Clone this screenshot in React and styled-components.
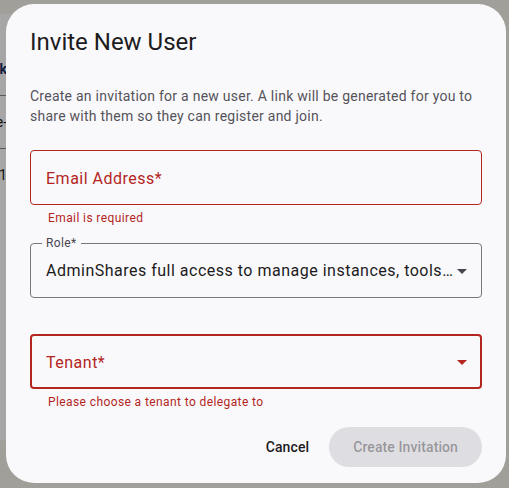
import React from 'react';
import styled, { createGlobalStyle } from 'styled-components';

const GlobalStyle = createGlobalStyle`
  html, body {
    margin: 0;
    height: 100%;
  }
  body {
    font-family: Roboto, 'Noto Sans', sans-serif;
    background: #f6f5ed;
    overflow: hidden;
  }
`;

const ERROR = '#b3261e';

const Page = styled.div`
  padding-top: 14px;
`;

const Card = styled.div`
  width: 490px;
  height: 426px;
  background: #ffffff;
  padding-top: 28px;
  box-sizing: border-box;
`;

const Row = styled.div`
  display: flex;
  align-items: center;
  height: ${(p) => (p.$header ? '53px' : '52px')};
  border-bottom: 1px solid ${(p) => (p.$last ? 'transparent' : '#8a8a8a')};
`;

const Cell = styled.div`
  width: 7px;
  display: flex;
  justify-content: flex-end;
  white-space: nowrap;
  font-size: 14px;
  font-weight: ${(p) => (p.$bold ? 700 : 400)};
  color: ${(p) => (p.$bold ? '#1c2f63' : '#222')};
`;

const Backdrop = styled.div`
  position: fixed;
  inset: 0;
  background: rgba(0, 0, 0, 0.35);
  display: flex;
  align-items: flex-start;
  justify-content: flex-start;
  padding: 4px 0 0 6px;
`;

const Dialog = styled.div`
  width: 500px;
  box-sizing: border-box;
  padding: 22px 24px 16px;
  background: #f9f9fc;
  border-radius: 28px;
  display: flex;
  flex-direction: column;
`;

const Title = styled.h2`
  margin: 0;
  font-size: 24px;
  line-height: 32px;
  font-weight: 400;
  color: #1d1b20;
`;

const Description = styled.p`
  margin: 28px 0 0;
  font-size: 14px;
  line-height: 20px;
  letter-spacing: 0.25px;
  color: #55535a;
`;

const Field = styled.div`
  position: relative;
  height: 55px;
  margin-top: ${(p) => p.$gap}px;
  box-sizing: border-box;
  display: flex;
  align-items: center;
  border: ${(p) => p.$border}px solid ${(p) => p.$color};
  border-radius: 4px;
  padding: ${(p) => (p.$empty ? 3 : 0)}px ${(p) => 8 - p.$border}px 0 ${(p) => 16 - p.$border}px;
`;

const FloatingLabel = styled.span`
  position: absolute;
  top: -9px;
  left: 11px;
  padding: 0 4px;
  background: #f9f9fc;
  font-size: 12px;
  line-height: 16px;
  letter-spacing: 0.4px;
  color: #49454f;
`;

const FieldValue = styled.span`
  flex: 1;
  min-width: 0;
  margin-right: -4px;
  font-size: 16px;
  line-height: 24px;
  letter-spacing: 0.5px;
  color: ${(p) => p.$color};
  white-space: nowrap;
  overflow: hidden;
  text-overflow: ellipsis;
`;

const DropIcon = styled.svg`
  width: 24px;
  height: 24px;
  flex-shrink: 0;
  margin-top: ${(p) => p.$shift}px;
  fill: ${(p) => p.$color};
`;

const HelperText = styled.div`
  margin-top: 5px;
  padding: 0 18px;
  font-size: 12px;
  line-height: 16px;
  letter-spacing: 0.4px;
  color: ${ERROR};
`;

const Actions = styled.div`
  display: flex;
  justify-content: flex-end;
  gap: 8px;
  margin-top: 17px;
`;

const Button = styled.button`
  height: 40px;
  border: none;
  border-radius: 20px;
  padding: 0 ${(p) => (p.$filled ? 24 : 12)}px;
  font-family: Roboto, sans-serif;
  font-size: 14px;
  font-weight: 500;
  letter-spacing: 0.1px;
  background: ${(p) => (p.$filled ? 'rgba(29, 27, 32, 0.12)' : 'transparent')};
  color: ${(p) => (p.$filled ? 'rgba(29, 27, 32, 0.38)' : '#1d1b20')};
  cursor: pointer;

  &:disabled {
    cursor: default;
  }
`;

const ArrowDropDown = ({ color, shift = 0 }) => (
  <DropIcon viewBox="0 0 24 24" $color={color} $shift={shift}>
    <path d="M7 10l5 5 5-5z" />
  </DropIcon>
);

const App = () => {
  return (
    <>
      <GlobalStyle />
      <Page>
        <Card>
          <Row $header>
            <Cell $bold>Network</Cell>
          </Row>
          <Row>
            <Cell>Site-</Cell>
          </Row>
          <Row $last>
            <Cell>us-east-1</Cell>
          </Row>
        </Card>
      </Page>

      <Backdrop>
        <Dialog role="dialog" aria-labelledby="invite-title">
          <Title id="invite-title">Invite New User</Title>
          <Description>
            Create an invitation for a new user. A link will be generated for you to share with
            them so they can register and join.
          </Description>

          <Field $gap={24} $border={1} $color={ERROR} $empty>
            <FieldValue $color={ERROR}>Email Address*</FieldValue>
          </Field>
          <HelperText>Email is required</HelperText>

          <Field $gap={17} $border={1} $color="#79747e">
            <FloatingLabel>Role*</FloatingLabel>
            <FieldValue $color="#1d1b20">
              AdminShares full access to manage instances, tools, users and settings
            </FieldValue>
            <ArrowDropDown color="#49454f" />
          </Field>

          <Field $gap={36} $border={2} $color={ERROR} $empty>
            <FieldValue $color={ERROR}>Tenant*</FieldValue>
            <ArrowDropDown color={ERROR} shift={-3} />
          </Field>
          <HelperText>Please choose a tenant to delegate to</HelperText>

          <Actions>
            <Button type="button">Cancel</Button>
            <Button type="button" $filled disabled>
              Create Invitation
            </Button>
          </Actions>
        </Dialog>
      </Backdrop>
    </>
  );
};

export default App;
